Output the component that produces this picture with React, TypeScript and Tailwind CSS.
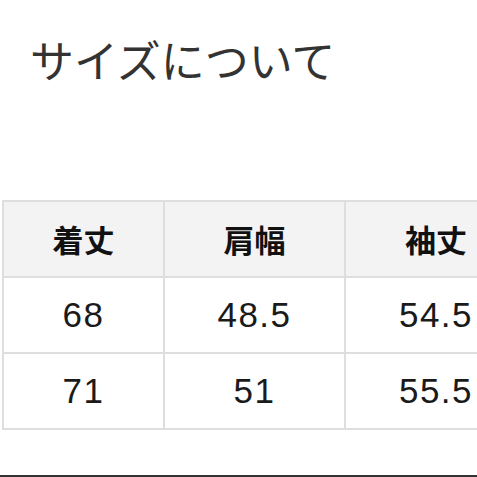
import React from 'react';

const rows = [
  ['68', '48.5', '54.5'],
  ['71', '51', '55.5'],
];

const heads = ['着丈', '肩幅', '袖丈'];

export default function App() {
  return (
    <div className="flex h-[477px] w-[477px] flex-col overflow-hidden bg-white">
      <h2
        className="pl-[30px] pt-[34px] text-[44px] leading-[50px] font-normal text-[#333]"
        style={{ fontFamily: '"Noto Sans CJK JP", sans-serif' }}
      >
        サイズについて
      </h2>

      <div className="ml-[2px] mt-[116px]">
        <table
          className="w-[524px] table-fixed border-collapse text-center"
          style={{ fontFamily: '"Liberation Sans", "Noto Sans CJK JP", sans-serif' }}
        >
          <colgroup>
            <col className="w-[161px]" />
            <col className="w-[181px]" />
            <col className="w-[182px]" />
          </colgroup>
          <thead>
            <tr className="h-[76px] bg-[#f3f3f3]">
              {heads.map((h) => (
                <th
                  key={h}
                  className="border-2 border-[#dedede] text-[31px] font-bold text-[#111]"
                  style={{ fontFamily: '"Noto Sans CJK JP", sans-serif' }}
                >
                  {h}
                </th>
              ))}
            </tr>
          </thead>
          <tbody>
            {rows.map((r, i) => (
              <tr key={i} className="h-[76px]">
                {r.map((v, j) => (
                  <td
                    key={j}
                    className="border-2 border-[#dedede] text-[35px] tracking-[1.5px] text-[#1a1a1a]"
                  >
                    {v}
                  </td>
                ))}
              </tr>
            ))}
          </tbody>
        </table>
      </div>

      <div className="mt-auto h-[2px] bg-[#333]" />
    </div>
  );
}
